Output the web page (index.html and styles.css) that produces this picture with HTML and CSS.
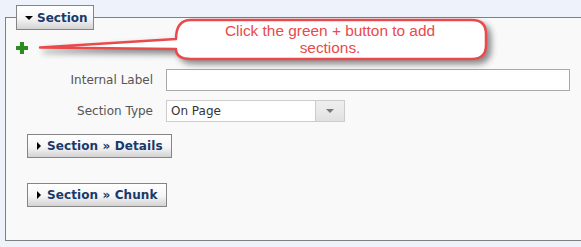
FILE: index.html
```html
<!DOCTYPE html>
<html lang="en">
    <head>
        <meta charset="UTF-8">
        <title>Section</title>
        <link rel="stylesheet" href="styles.css">
    </head>
    <body>

        <fieldset class="panel">
            <legend class="toggle"><span class="arrow-down"></span>Section</legend>

            <div class="add-row">
                <svg class="add-icon" width="12" height="12" viewBox="0 0 12 12">
                    <rect x="4" y="0" width="4" height="12" fill="#2b8c1f"/>
                    <rect x="0" y="4" width="12" height="4" fill="#2b8c1f"/>
                </svg>
            </div>

            <div class="form">
                <label for="internalLabel">Internal Label</label>
                <input type="text" id="internalLabel">
                <label>Section Type</label>
                <div class="select">
                    <span class="select-value">On Page</span>
                    <span class="select-btn"><span class="select-arrow"></span></span>
                </div>
            </div>

            <div class="sub first">
                <button class="toggle"><span class="arrow-right"></span>Section &raquo; Details</button>
            </div>
            <div class="sub">
                <button class="toggle"><span class="arrow-right"></span>Section &raquo; Chunk</button>
            </div>
        </fieldset>

        <!-- annotation bubble -->
        <svg class="callout" width="581" height="247" viewBox="0 0 581 247">
            <path class="bubble" d="M191 20 H472 Q486 20 486 34 V45 Q486 59 472 59 H191 Q176 59 176 49 L40 47.5 L176 39 Q176 20 191 20 Z"/>
            <text x="330" y="36">Click the green + button to add</text>
            <text x="330" y="53">sections.</text>
        </svg>

    </body>
</html>
```

FILE: styles.css
```css
body {
    margin: 0;
    background: #eef2fb;
    font-family: "DejaVu Sans", Verdana, sans-serif;
    font-size: 12px;
    position: relative;
}
.panel {
    margin: 5px 0 0 5px;
    padding: 0 0 33px 0;
    border: 1px solid #808080;
    border-right: none;
    background: #f9f9f9;
}
.toggle {
    display: flex;
    align-items: center;
    box-sizing: border-box;
    border: 1px solid #858585;
    background: linear-gradient(#ffffff, #f5f5f5 55%, #d3d3d3);
    color: #173a6a;
    font-family: "DejaVu Sans", Verdana, sans-serif;
    font-weight: bold;
    font-size: 12px;
    cursor: pointer;
}
legend.toggle {
    margin-left: 10px;
    padding: 0 6px 0 8px;
    height: 25px;
    width: 78px;
}
.arrow-down {
    width: 0;
    height: 0;
    border-top: 4px solid #000;
    border-left: 4px solid transparent;
    border-right: 4px solid transparent;
    margin-right: 4px;
}
.arrow-right {
    width: 0;
    height: 0;
    border-left: 4px solid #000;
    border-top: 4px solid transparent;
    border-bottom: 4px solid transparent;
    margin-right: 6px;
}
.add-row {
    margin: 12px 0 0 10px;
    height: 12px;
}
.add-icon {
    display: block;
}
.form {
    display: grid;
    grid-template-columns: 147px 404px;
    column-gap: 13px;
    row-gap: 9px;
    margin-top: 15px;
    align-items: center;
}
.form label {
    text-align: right;
    color: #555;
}
.form input[type="text"] {
    box-sizing: border-box;
    width: 404px;
    height: 22px;
    margin: 0;
    border: 1px solid #a9a9a9;
    background: #fff;
}
.select {
    box-sizing: border-box;
    display: flex;
    width: 179px;
    height: 22px;
    border: 1px solid #cccccc;
    background: #fff;
}
.select-value {
    flex: 1;
    padding-left: 4px;
    line-height: 20px;
    color: #333;
}
.select-btn {
    width: 28px;
    border-left: 1px solid #cccccc;
    background: linear-gradient(#eeeeee, #e9e9e9 50%, #e0e0e0);
    display: flex;
    align-items: center;
    justify-content: center;
}
.select-arrow {
    width: 0;
    height: 0;
    border-top: 4px solid #777;
    border-left: 4px solid transparent;
    border-right: 4px solid transparent;
}
.sub {
    margin: 25px 0 0 21px;
}
.sub.first {
    margin-top: 12px;
}
.sub .toggle {
    height: 24px;
    padding: 0 8px 0 9px;
    letter-spacing: 0.1px;
}
.callout {
    position: absolute;
    top: 0;
    left: 0;
    pointer-events: none;
}
.bubble {
    fill: #fff;
    stroke: #e84a4d;
    stroke-width: 2.5;
    stroke-linejoin: round;
    filter: drop-shadow(4px 4px 3px rgba(0, 0, 0, 0.45));
}
.callout text {
    font-family: "Liberation Sans", Arial, sans-serif;
    font-size: 15.4px;
    fill: #e84a4d;
    text-anchor: middle;
}
```
